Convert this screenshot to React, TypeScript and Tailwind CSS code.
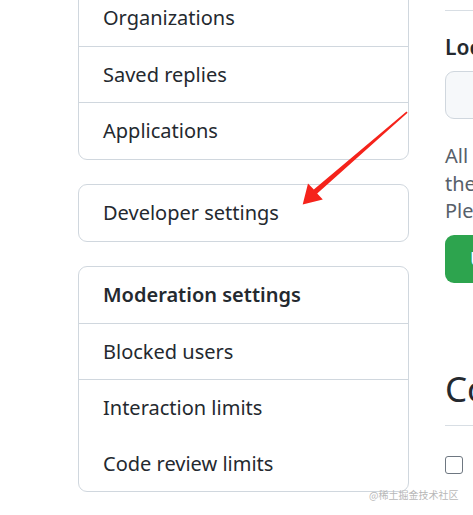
import React from "react";

const font = { fontFamily: '"Noto Sans", "Open Sans", sans-serif' };

function Row({ label, h, border = true, bold = false }: { label: string; h: string; border?: boolean; bold?: boolean }) {
  return (
    <div
      className={`flex items-center pl-[24px] ${h} ${border ? "border-b border-[#d0d7de]" : ""} ${bold ? "font-semibold" : ""}`}
    >
      {label}
    </div>
  );
}

export default function App() {
  return (
    <div className="relative w-[473px] h-[515px] overflow-hidden bg-white text-[#24292f]" style={font}>
      <div className="flex gap-[36px] pl-[78px] mt-[-67px]">
        <div className="w-[331px] shrink-0 flex flex-col gap-[24px] text-[20px]">
          <div className="border border-[#d0d7de] rounded-[9px]">
            <Row label="Emails" h="h-[56px]" />
            <Row label="Organizations" h="h-[57px]" />
            <Row label="Saved replies" h="h-[56px]" />
            <Row label="Applications" h="h-[56px]" border={false} />
          </div>
          <div className="border border-[#d0d7de] rounded-[9px]">
            <Row label="Developer settings" h="h-[56px]" border={false} />
          </div>
          <div className="border border-[#d0d7de] rounded-[9px]">
            <Row label="Moderation settings" h="h-[57px]" bold />
            <Row label="Blocked users" h="h-[56px]" />
            <Row label="Interaction limits" h="h-[56px]" border={false} />
            <Row label="Code review limits" h="h-[55px]" border={false} />
          </div>
        </div>
        <div className="w-[400px] shrink-0">
          <div className="h-[78px] border-b border-[#d8dee4]" />
          <div className="mt-[21px] h-[30px] leading-[30px] text-[21px] font-semibold">Location</div>
          <div className="mt-[9px] h-[48px] border border-[#d0d7de] rounded-[9px] bg-[#f6f8fa]" />
          <div className="mt-[23px] text-[20px] leading-[27.5px] text-[#57606a] whitespace-nowrap">
            <div>All changes to your repository location</div>
            <div>there may be a delay for them to appear.</div>
            <div>Please wait for the change.</div>
          </div>
          <div className="mt-[10px] h-[48px] w-[200px] rounded-[9px] bg-[#2da44e] text-white text-[20px] font-semibold flex items-center pl-[25px]">
            Update
          </div>
          <div className="mt-[84px] h-[44px] leading-[44px] text-[35px]">Contributions</div>
          <div className="mt-[14px] border-b border-[#d8dee4]" />
          <div className="mt-[30px] w-[18px] h-[18px] border-[1.5px] border-[#6e7781] rounded-[3px]" />
        </div>
      </div>

      <svg className="absolute left-0 top-0" width="473" height="515" viewBox="0 0 473 515">
        <polygon
          points="406.5,111.4 313.8,189.6 308,183.5 302.7,204.5 322.8,199.5 317.2,193.4 407.6,112.8"
          fill="#f5231b"
        />
      </svg>

      <div
        className="absolute left-[369px] top-[488px] text-[10px] leading-[14px] text-[#b8b8b8] whitespace-nowrap"
        style={{ fontFamily: '"Noto Sans CJK SC", sans-serif' }}
      >
        @稀土掘金技术社区
      </div>
    </div>
  );
}
